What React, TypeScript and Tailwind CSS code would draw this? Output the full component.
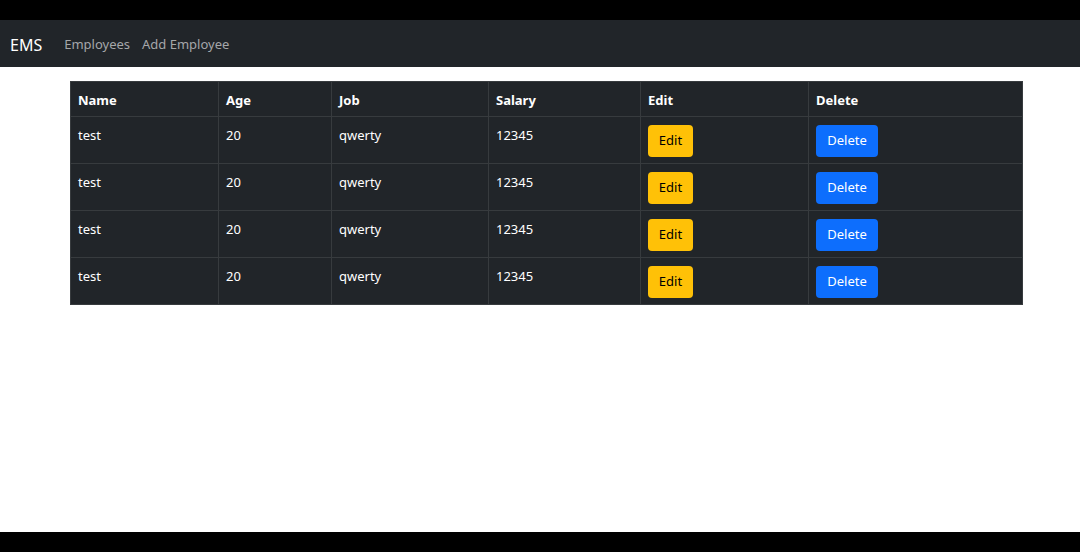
const rows = [
  { name: "test", age: "20", job: "qwerty", salary: "12345" },
  { name: "test", age: "20", job: "qwerty", salary: "12345" },
  { name: "test", age: "20", job: "qwerty", salary: "12345" },
  { name: "test", age: "20", job: "qwerty", salary: "12345" },
];

export default function App() {
  return (
    <div
      className="flex h-[552px] w-[1080px] flex-col bg-white"
      style={{ fontFamily: '"Noto Sans", "Open Sans", sans-serif' }}
    >
      <div className="h-[20px] bg-black" />

      <nav className="flex h-[47px] items-center bg-[#212529] px-[10px] pt-[2px]">
        <span className="mr-[22px] text-[16px] text-white">EMS</span>
        <a className="mr-[12px] text-[13px] text-[#a5a7a9]">Employees</a>
        <a className="text-[13px] text-[#a5a7a9]">Add Employee</a>
      </nav>

      <main className="flex-1 px-[70px] pt-[14px]">
        <table className="w-[952px] table-fixed border-collapse bg-[#212529] text-[13px] text-white">
          <colgroup>
            <col className="w-[148px]" />
            <col className="w-[113px]" />
            <col className="w-[157px]" />
            <col className="w-[152px]" />
            <col className="w-[168px]" />
            <col className="w-[214px]" />
          </colgroup>
          <thead>
            <tr className="h-[35px]">
              {["Name", "Age", "Job", "Salary", "Edit", "Delete"].map((h) => (
                <th
                  key={h}
                  className="border border-[#373b3e] px-[7px] pt-[3px] text-left font-bold"
                >
                  {h}
                </th>
              ))}
            </tr>
          </thead>
          <tbody>
            {rows.map((r, i) => (
              <tr key={i} className="h-[47px]">
                <td className="border border-[#373b3e] px-[7px] pt-[9px] align-top">{r.name}</td>
                <td className="border border-[#373b3e] px-[7px] pt-[9px] align-top">{r.age}</td>
                <td className="border border-[#373b3e] px-[7px] pt-[9px] align-top">{r.job}</td>
                <td className="border border-[#373b3e] px-[7px] pt-[9px] align-top">{r.salary}</td>
                <td className="border border-[#373b3e] px-[7px] pt-[1px] align-middle">
                  <button className="h-[32px] w-[45px] rounded-[4px] bg-[#ffc107] text-[13px] text-black">
                    Edit
                  </button>
                </td>
                <td className="border border-[#373b3e] px-[7px] pt-[1px] align-middle">
                  <button className="h-[32px] w-[62px] rounded-[4px] bg-[#0d6efd] text-[13px] text-white">
                    Delete
                  </button>
                </td>
              </tr>
            ))}
          </tbody>
        </table>
      </main>

      <div className="h-[20px] bg-black" />
    </div>
  );
}
